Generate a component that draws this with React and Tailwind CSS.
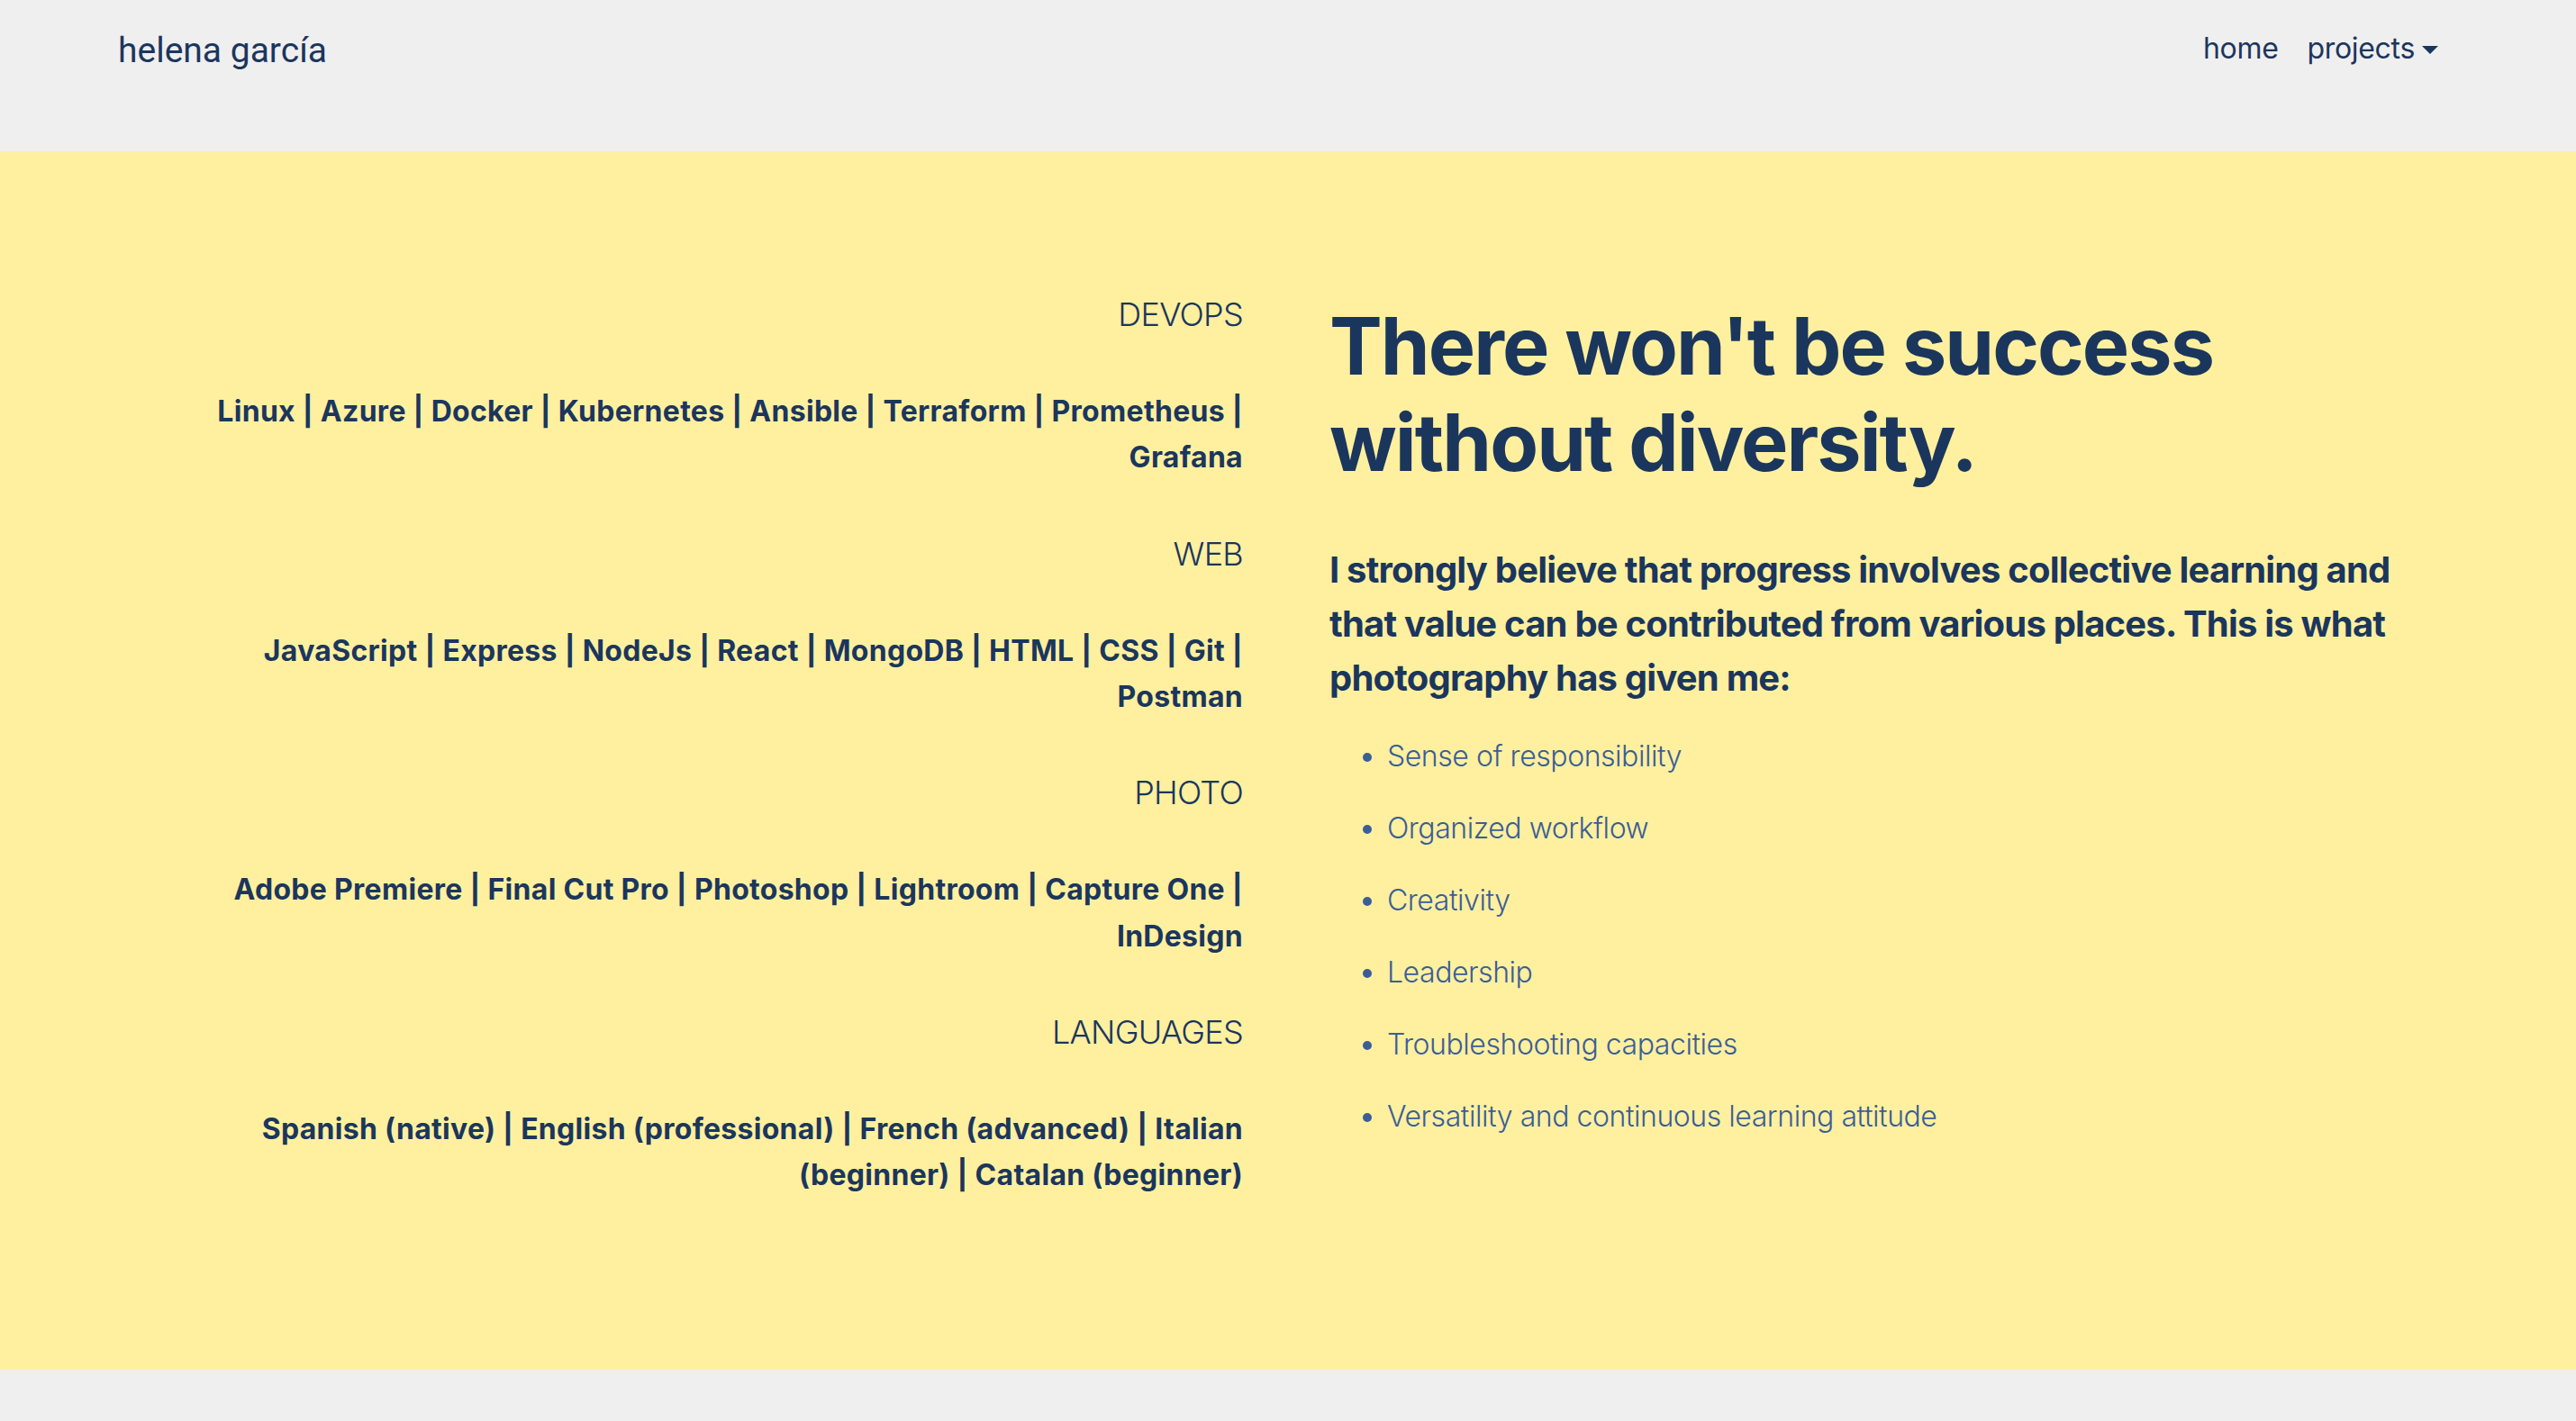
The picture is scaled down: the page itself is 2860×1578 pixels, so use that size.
import React from "react";

const groups = [
  {
    title: "DEVOPS",
    text: "Linux | Azure | Docker | Kubernetes | Ansible | Terraform | Prometheus | Grafana",
  },
  {
    title: "WEB",
    text: "JavaScript | Express | NodeJs | React | MongoDB | HTML | CSS | Git | Postman",
  },
  {
    title: "PHOTO",
    text: "Adobe Premiere | Final Cut Pro | Photoshop | Lightroom | Capture One | InDesign",
  },
  {
    title: "LANGUAGES",
    text: "Spanish (native) | English (professional) | French (advanced) | Italian (beginner) | Catalan (beginner)",
  },
];

const items = [
  "Sense of responsibility",
  "Organized workflow",
  "Creativity",
  "Leadership",
  "Troubleshooting capacities",
  "Versatility and continuous learning attitude",
];

export default function App() {
  return (
    <div className="min-h-screen bg-[#efefef] text-[#1b365d] font-['Inter','Noto_Sans',sans-serif]">
      <header className="h-[168px] flex justify-between items-start pl-[131px] pr-[153px]">
        <a className="mt-[26px] text-[39px] leading-[60px] font-['Roboto','Inter',sans-serif] text-[#1b365d]">
          helena garcía
        </a>
        <nav className="mt-[30px] flex gap-[32px] text-[32px] leading-[48px] tracking-[-0.01em]">
          <a>home</a>
          <a className="flex items-center">
            projects
            <span className="inline-block ml-[8px] mt-[2px] w-0 h-0 border-t-[9.6px] border-t-[#1b365d] border-x-[9.6px] border-x-transparent border-b-0"></span>
          </a>
        </nav>
      </header>

      <section className="bg-[#fff09f] pt-[160px] pb-[191px] pl-[178px] pr-[182px] grid grid-cols-2 gap-x-[96px] items-start">
        <div className="flex flex-col gap-[60px] text-right">
          {groups.map((g) => (
            <React.Fragment key={g.title}>
              <h5 className="text-[36px] leading-[1.2] font-light tracking-[-0.02em]">{g.title}</h5>
              <p className="text-[32px] leading-[1.6] font-bold tracking-[0.009em]">{g.text}</p>
            </React.Fragment>
          ))}
        </div>
        <div className="flex flex-col pt-[3px]">
          <h1 className="text-[88px] leading-[107px] font-bold tracking-[-0.022em]">
            There won't be success without diversity.
          </h1>
          <p className="mt-[58px] text-[40px] leading-[60px] font-bold tracking-[-0.02em]">
            I strongly believe that progress involves collective learning and that value can be contributed from various places. This is what photography has given me:
          </p>
          <ul className="mt-[33px] pl-[64px] list-disc flex flex-col gap-[32px] text-[32px] leading-[48px] font-light text-[#3b5e97] tracking-[-0.014em]">
            {items.map((it) => (
              <li key={it}>{it}</li>
            ))}
          </ul>
        </div>
      </section>
      <footer className="h-[59px]"></footer>
    </div>
  );
}
